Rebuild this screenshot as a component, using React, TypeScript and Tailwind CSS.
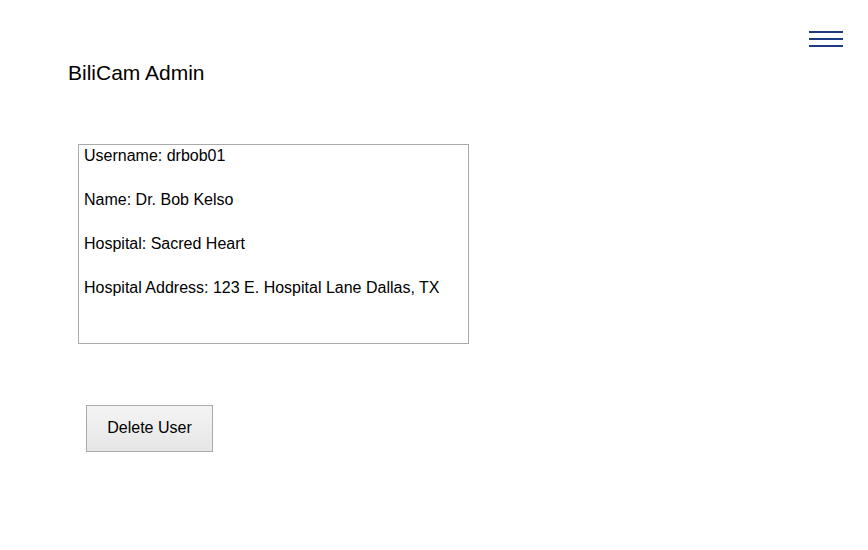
export default function App() {
  return (
    <div className="relative w-[868px] h-[550px] bg-white text-black" style={{ fontFamily: '"Liberation Sans", Arial, sans-serif' }}>
      <button className="absolute left-[809px] top-[31px] flex flex-col gap-[5px]" aria-label="menu">
        <span className="block w-[34px] h-[2px] bg-[#1e3a80]" />
        <span className="block w-[34px] h-[2px] bg-[#1e3a80]" />
        <span className="block w-[34px] h-[2px] bg-[#1e3a80]" />
      </button>
      <div className="pl-[68px] pt-[61px]">
        <h1 className="text-[21px] leading-[24px]">BiliCam Admin</h1>
      </div>
      <div className="ml-[78px] mt-[59px] w-[391px] h-[200px] border border-[#aaaaaa] pt-[2px] px-[5px] flex flex-col gap-[26px] text-[16px] leading-[18px]">
        <div>Username: drbob01</div>
        <div>Name: Dr. Bob Kelso</div>
        <div>Hospital: Sacred Heart</div>
        <div>Hospital Address: 123 E. Hospital Lane Dallas, TX</div>
      </div>
      <button className="ml-[86px] mt-[61px] w-[127px] h-[47px] border border-[#aaaaaa] bg-gradient-to-b from-[#f4f4f4] to-[#e6e6e6] text-[16px] leading-[18px] pb-[2px]">
        Delete User
      </button>
    </div>
  );
}
